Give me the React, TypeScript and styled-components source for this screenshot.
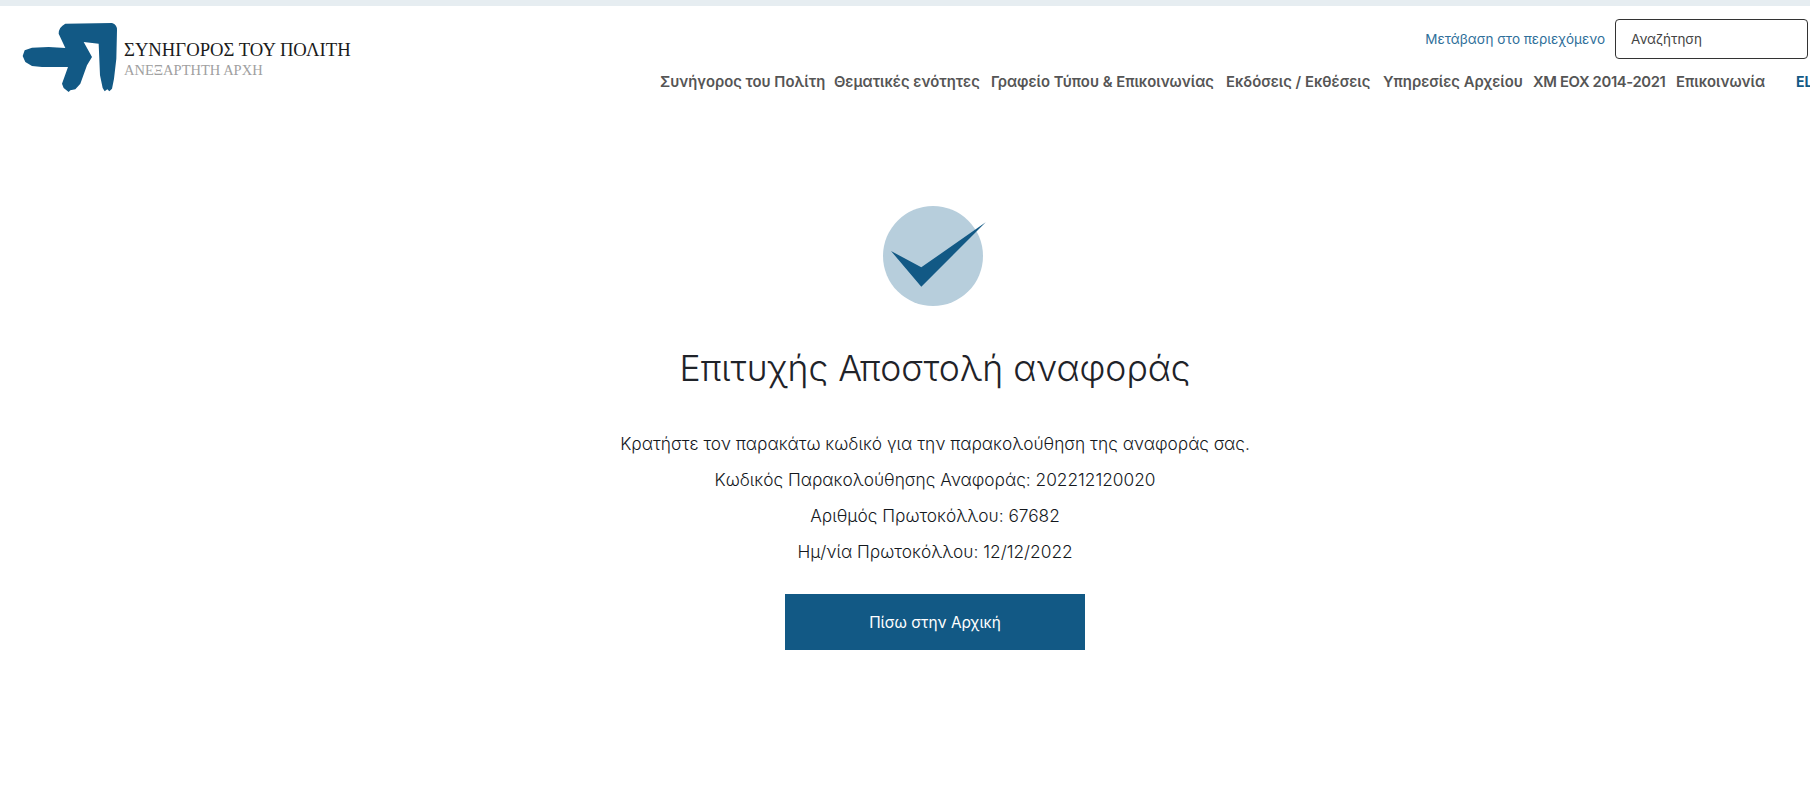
import React from "react";
import styled, { createGlobalStyle } from "styled-components";

const Global = createGlobalStyle`
  html, body { margin: 0; padding: 0; background: #fff; height: 800px; overflow: hidden; }
  body { font-family: "Inter", "Noto Sans", sans-serif; color: #1f2329; }
  * { box-sizing: border-box; }
`;

const Page = styled.div`
  width: 1810px;
  height: 800px;
  overflow: hidden;
  display: flex;
  flex-direction: column;
`;
const TopBar = styled.div`
  height: 6px;
  background: #e6edf1;
`;
const Header = styled.header`
  display: flex;
  justify-content: space-between;
  height: 94px;
  padding: 13px 0 0 22px;
`;
const Brand = styled.a`
  display: flex;
  align-items: flex-start;
  gap: 6px;
  padding-top: 3px;
`;
const LogoMark = styled.svg`
  width: 96px;
  height: 72px;
  fill: #125985;
`;
const BrandText = styled.div`
  display: flex;
  flex-direction: column;
  padding-top: 17px;
  font-family: "Liberation Serif", serif;
`;
const BrandTitle = styled.span`
  font-size: 18.7px;
  line-height: 22px;
  color: #1b1b1b;
  white-space: nowrap;
`;
const BrandSub = styled.span`
  font-size: 14.5px;
  line-height: 18px;
  color: #a0a0a0;
  white-space: nowrap;
`;
const Right = styled.div`
  display: flex;
  flex-direction: column;
  align-items: flex-end;
  width: 1150px;
`;
const Utility = styled.div`
  display: flex;
  align-items: center;
  gap: 10px;
  padding-right: 2px;
`;
const SkipLink = styled.a`
  font-size: 13.5px;
  color: #2f6f9a;
  white-space: nowrap;
`;
const SearchBox = styled.div`
  width: 193px;
  height: 40px;
  border: 1px solid #333;
  border-radius: 4px;
  padding: 0 15px;
  display: flex;
  align-items: center;
  font-size: 13.5px;
  color: #444;
`;
const Nav = styled.nav`
  display: flex;
  align-items: center;
  width: 1150px;
  margin-top: 13px;
  overflow: hidden;
`;
const NavItem = styled.a<{ $w: number; $tight?: boolean }>`
  flex: 0 0 ${(p) => p.$w}px;
  font-size: 14.8px;
  font-weight: 600;
  line-height: 20px;
  letter-spacing: ${(p) => (p.$tight ? "-0.35px" : "0")};
  color: #555;
  white-space: nowrap;
`;
const Lang = styled.a`
  font-size: 14px;
  font-weight: 700;
  line-height: 20px;
  color: #125985;
`;
const Main = styled.main`
  display: flex;
  flex-direction: column;
  align-items: center;
  padding: 106px 0 0 60px;
`;
const Check = styled.svg`
  width: 104px;
  height: 100px;
  display: block;
`;
const Title = styled.h1`
  margin: 38px 0 0;
  font-size: 35.5px;
  font-weight: 300;
  line-height: 50px;
  color: #1f2329;
`;
const Lines = styled.div`
  margin-top: 32px;
  display: flex;
  flex-direction: column;
  align-items: center;
`;
const Line = styled.p`
  margin: 0;
  font-size: 17.3px;
  font-weight: 300;
  line-height: 36px;
  color: #14181d;
`;
const BackButton = styled.a`
  margin-top: 24px;
  width: 300px;
  height: 56px;
  background: #125985;
  color: #fff;
  font-size: 15.4px;
  font-weight: 400;
  display: flex;
  align-items: center;
  justify-content: center;
`;

const navItems: [string, number, boolean?][] = [
  ["Συνήγορος του Πολίτη", 174],
  ["Θεματικές ενότητες", 157],
  ["Γραφείο Τύπου & Επικοινωνίας", 235],
  ["Εκδόσεις / Εκθέσεις", 157],
  ["Υπηρεσίες Αρχείου", 150],
  ["ΧΜ ΕΟΧ 2014-2021", 143, true],
  ["Επικοινωνία", 120],
];

export default function App() {
  return (
    <Page>
      <Global />
      <TopBar />
      <Header>
        <Brand>
          <LogoMark viewBox="20 20 288 216">
            <path d="M150 25 L290 23 Q306 28 305 45 L303 130 L296 190 L290 220 L282 228 L276 222 L268 228 L262 218 L254 180 L250 85 L205 80 L230 125 L215 150 L195 205 L180 222 L165 225 L160 230 L145 218 L140 205 L158 155 L80 155 L50 152 L30 140 L22 122 L28 105 L50 97 L100 95 L150 98 L130 55 Q130 35 150 25 Z" />
          </LogoMark>
          <BrandText>
            <BrandTitle>ΣΥΝΗΓΟΡΟΣ ΤΟΥ ΠΟΛΙΤΗ</BrandTitle>
            <BrandSub>ΑΝΕΞΑΡΤΗΤΗ ΑΡΧΗ</BrandSub>
          </BrandText>
        </Brand>
        <Right>
          <Utility>
            <SkipLink>Μετάβαση στο περιεχόμενο</SkipLink>
            <SearchBox>Αναζήτηση</SearchBox>
          </Utility>
          <Nav>
            {navItems.map(([label, w, tight]) => (
              <NavItem key={label} $w={w} $tight={tight}>{label}</NavItem>
            ))}
            <Lang>EL</Lang>
          </Nav>
        </Right>
      </Header>
      <Main>
        <Check viewBox="0 0 104 100">
          <circle cx="50" cy="50" r="50" fill="#b7cedc" />
          <polygon points="8,45 38.3,61.3 102.7,16.3 38.3,80.7" fill="#125985" />
        </Check>
        <Title>Επιτυχής Αποστολή αναφοράς</Title>
        <Lines>
          <Line>Κρατήστε τον παρακάτω κωδικό για την παρακολούθηση της αναφοράς σας.</Line>
          <Line>Κωδικός Παρακολούθησης Αναφοράς: 202212120020</Line>
          <Line>Αριθμός Πρωτοκόλλου: 67682</Line>
          <Line>Ημ/νία Πρωτοκόλλου: 12/12/2022</Line>
        </Lines>
        <BackButton>Πίσω στην Αρχική</BackButton>
      </Main>
    </Page>
  );
}
